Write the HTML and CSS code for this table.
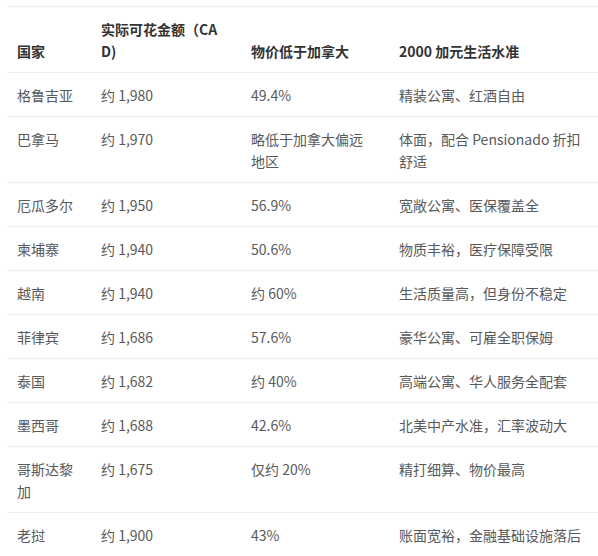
FILE: index.html
```html
<!DOCTYPE html>
<html lang="zh-CN">
<head>
<meta charset="utf-8">
<link rel="stylesheet" href="styles.css">
</head>
<body>
<div class="wrap">
<table class="cost-table">
  <colgroup>
    <col class="c1"><col class="c2"><col class="c3"><col class="c4">
  </colgroup>
  <thead>
    <tr>
      <th>国家</th>
      <th>实际可花金额（CAD)</th>
      <th>物价低于加拿大</th>
      <th>2000 加元生活水准</th>
    </tr>
  </thead>
  <tbody>
    <tr><td>格鲁吉亚</td><td>约 1,980</td><td>49.4%</td><td>精装公寓、红酒自由</td></tr>
    <tr><td>巴拿马</td><td>约 1,970</td><td>略低于加拿大偏远地区</td><td>体面，配合 Pensionado 折扣舒适</td></tr>
    <tr><td>厄瓜多尔</td><td>约 1,950</td><td>56.9%</td><td>宽敞公寓、医保覆盖全</td></tr>
    <tr><td>柬埔寨</td><td>约 1,940</td><td>50.6%</td><td>物质丰裕，医疗保障受限</td></tr>
    <tr><td>越南</td><td>约 1,940</td><td>约 60%</td><td>生活质量高，但身份不稳定</td></tr>
    <tr><td>菲律宾</td><td>约 1,686</td><td>57.6%</td><td>豪华公寓、可雇全职保姆</td></tr>
    <tr><td>泰国</td><td>约 1,682</td><td>约 40%</td><td>高端公寓、华人服务全配套</td></tr>
    <tr><td>墨西哥</td><td>约 1,688</td><td>42.6%</td><td>北美中产水准，汇率波动大</td></tr>
    <tr><td>哥斯达黎加</td><td>约 1,675</td><td>仅约 20%</td><td>精打细算、物价最高</td></tr>
    <tr><td>老挝</td><td>约 1,900</td><td>43%</td><td>账面宽裕，金融基础设施落后</td></tr>
  </tbody>
</table>
</div>
</body>
</html>
```

FILE: styles.css
```css
html, body {
  margin: 0;
  padding: 0;
  background: #ffffff;
}

body {
  font-family: "Noto Sans CJK SC", "Noto Sans", sans-serif;
  font-size: 14px;
  color: #595959;
}

.wrap {
  padding: 6px 0 0 7px;
  overflow: hidden;
}

.cost-table {
  table-layout: fixed;
  width: 600px;
  border-collapse: separate;
  border-spacing: 0;
}

.c1 { width: 84px; }
.c2 { width: 150px; }
.c3 { width: 148px; }
.c4 { width: 218px; }

.cost-table th,
.cost-table td {
  text-align: left;
  line-height: 22px;
  padding: 11px 10px 10px 10px;
  border-bottom: 1px solid #eeeeee;
  word-break: break-all;
}

.cost-table th {
  border-top: 1px solid #eeeeee;
  vertical-align: bottom;
  font-weight: bold;
  color: #333333;
}

.cost-table td {
  vertical-align: top;
}

.cost-table td:nth-child(3),
.cost-table th:nth-child(3) {
  padding-right: 24px;
}

.cost-table td:nth-child(4),
.cost-table th:nth-child(4) {
  padding-right: 19px;
}
```
